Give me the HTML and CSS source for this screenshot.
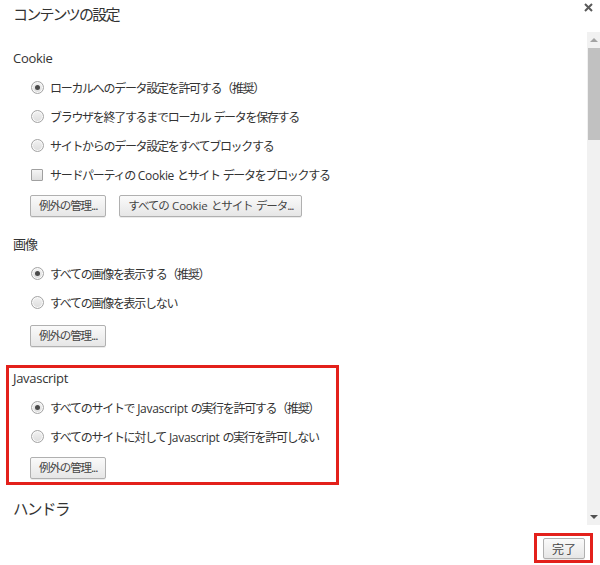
FILE: index.html
```html
<!DOCTYPE html>
<html lang="ja">
<head>
<meta charset="utf-8">
<title>コンテンツの設定</title>
<link rel="stylesheet" href="styles.css">
</head>
<body>
<div class="dialog">
  <header class="header">
    <h1 class="title">コンテンツの設定</h1>
    <button class="close" aria-label="閉じる">
      <svg width="9" height="9" viewBox="0 0 9 9"><path d="M1 1L8 8M8 1L1 8" stroke="#5a5a5a" stroke-width="2"/></svg>
    </button>
  </header>
  <div class="body">
    <div class="content">
      <section class="section cookie">
        <h2 class="heading lat">Cookie</h2>
        <ul class="options">
          <li class="opt"><span class="radio checked"></span><span>ローカルへのデータ設定を許可する（推奨）</span></li>
          <li class="opt"><span class="radio"></span><span>ブラウザを終了するまでローカル データを保存する</span></li>
          <li class="opt"><span class="radio"></span><span>サイトからのデータ設定をすべてブロックする</span></li>
          <li class="opt"><span class="check"></span><span>サードパーティの <span class="lat">Cookie</span> とサイト データをブロックする</span></li>
        </ul>
        <div class="buttons">
          <button class="btn">例外の管理...</button>
          <button class="btn">すべての <span class="lat">Cookie</span> とサイト データ...</button>
        </div>
      </section>
      <section class="section images">
        <h2 class="heading">画像</h2>
        <ul class="options">
          <li class="opt"><span class="radio checked"></span><span>すべての画像を表示する（推奨）</span></li>
          <li class="opt"><span class="radio"></span><span>すべての画像を表示しない</span></li>
        </ul>
        <div class="buttons">
          <button class="btn">例外の管理...</button>
        </div>
      </section>
      <section class="section js highlight">
        <h2 class="heading lat">Javascript</h2>
        <ul class="options">
          <li class="opt"><span class="radio checked"></span><span>すべてのサイトで <span class="lat">Javascript</span> の実行を許可する（推奨）</span></li>
          <li class="opt"><span class="radio"></span><span>すべてのサイトに対して <span class="lat">Javascript</span> の実行を許可しない</span></li>
        </ul>
        <div class="buttons">
          <button class="btn">例外の管理...</button>
        </div>
      </section>
      <section class="section handlers">
        <h2 class="heading big">ハンドラ</h2>
      </section>
    </div>
    <div class="scrollbar">
      <div class="arrow up"></div>
      <div class="thumb"></div>
      <div class="track"></div>
      <div class="arrow down"></div>
    </div>
  </div>
  <footer class="footer">
    <div class="done-wrap">
      <button class="btn done">完了</button>
    </div>
  </footer>
</div>
</body>
</html>
```
FILE: styles.css
```css
* { box-sizing: border-box; }
html, body { margin: 0; padding: 0; background: #fff; }
body {
  font-family: "Noto Sans CJK JP", "Noto Sans", sans-serif;
  color: #333;
  width: 600px;
  height: 565px;
  overflow: hidden;
}
.dialog { display: flex; flex-direction: column; height: 565px; }
.header {
  height: 32px;
  display: flex;
  justify-content: space-between;
  align-items: flex-start;
}
.title {
  margin: 0;
  padding: 4px 0 0 13px;
  font-size: 15px;
  font-weight: normal;
  line-height: 20px;
  letter-spacing: -1.8px;
  color: #333;
}
.close {
  border: 0;
  background: none;
  padding: 0;
  margin: 3px 7px 0 0;
  width: 9px;
  height: 9px;
  display: flex;
}
.body {
  height: 493px;
  display: flex;
}
.content {
  flex: 1;
  overflow: hidden;
  padding: 16px 0 0 13px;
}
.lat {
  font-family: "Open Sans", "Noto Sans", sans-serif;
  letter-spacing: -0.2px;
}
.heading {
  margin: 0;
  font-size: 13px;
  font-weight: normal;
  line-height: 20px;
  height: 20px;
  letter-spacing: -1px;
}
.heading.lat { letter-spacing: -0.3px; }
.heading.big { font-size: 15.5px; letter-spacing: -1.5px; }
.options {
  list-style: none;
  margin: 5px 0 0;
  padding: 0 0 0 18px;
}
.opt {
  height: 29px;
  display: flex;
  align-items: center;
  gap: 6px;
  font-size: 12px;
  letter-spacing: -1.3px;
  word-spacing: 1.5px;
  color: #333;
}
.opt .lat { font-size: 12px; letter-spacing: -0.3px; word-spacing: 0; }
.radio {
  width: 13px;
  height: 13px;
  border-radius: 50%;
  border: 1px solid #a4a4a4;
  background: linear-gradient(#f2f2f2, #dcdcdc);
  flex: none;
  display: flex;
  align-items: center;
  justify-content: center;
  box-shadow: inset 0 0 0 1px #fafafa;
}
.radio.checked::after {
  content: "";
  width: 5px;
  height: 5px;
  border-radius: 50%;
  background: #4a4a4a;
}
.check {
  width: 12px;
  height: 12px;
  border: 1px solid #a0a0a0;
  border-radius: 1px;
  background: linear-gradient(#f4f4f4, #dedede);
  flex: none;
  margin-right: 1px;
}
.buttons {
  display: flex;
  gap: 13px;
  margin: 6px 0 0 17px;
}
.btn {
  font-family: "Noto Sans CJK JP", "Noto Sans", sans-serif;
  font-size: 11.5px;
  letter-spacing: -1.1px;
  word-spacing: 2px;
  color: #444;
  height: 22px;
  padding: 0 8px;
  border: 1px solid #b0b0b0;
  border-radius: 2px;
  background: linear-gradient(#fafafa, #e6e6e6);
  box-shadow: 0 1px 0 rgba(0,0,0,0.08);
  display: flex;
  align-items: center;
  line-height: 1;
  white-space: pre;
}
.btn .lat { font-size: 11.5px; letter-spacing: -0.2px; }
.images { margin-top: 17px; }
.images .buttons { margin-top: 8px; }
.highlight {
  margin: 18px 0 0 -7px;
  width: 333px;
  border: 3px solid #e3201b;
  padding: 0 0 3px 4px;
}
.highlight .options { padding-left: 18px; margin-top: 5px; }
.handlers { margin-top: 13px; }
.scrollbar {
  width: 13px;
  flex: none;
  background: #f1f1f1;
  display: flex;
  flex-direction: column;
}
.arrow {
  height: 16px;
  display: flex;
  align-items: center;
  justify-content: center;
  flex: none;
}
.arrow::after {
  content: "";
  width: 0;
  height: 0;
  border-left: 4px solid transparent;
  border-right: 4px solid transparent;
}
.arrow.up::after { border-bottom: 4px solid #a3a3a3; }
.arrow.down::after { border-top: 4px solid #505050; }
.thumb {
  height: 92px;
  margin-left: 1px;
  background: #c1c1c1;
  flex: none;
}
.track { flex: 1; }
.footer {
  height: 40px;
  display: flex;
  justify-content: flex-end;
  align-items: flex-start;
  padding: 8px 7px 0 0;
}
.done-wrap {
  border: 3px solid #e3201b;
  padding: 2px 5px 1px 6px;
}
.btn.done {
  width: 42px;
  height: 21px;
  padding: 0;
  justify-content: center;
  font-size: 12px;
  letter-spacing: 0;
}
```
